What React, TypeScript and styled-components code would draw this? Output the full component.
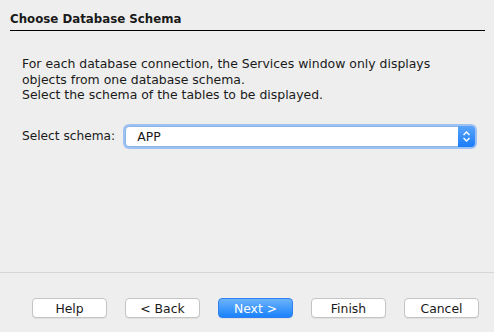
import * as React from 'react'
import styled, { createGlobalStyle } from 'styled-components'

const GlobalStyle = createGlobalStyle`
  html, body {
    margin: 0;
    padding: 0;
    background: #eeeeee;
  }
  body {
    font-family: "DejaVu Sans", "Liberation Sans", sans-serif;
    font-size: 12px;
    color: #1a1a1a;
  }
`

const Dialog = styled.div`
  width: 494px;
  height: 332px;
  display: flex;
  flex-direction: column;
  background: #eeeeee;
`

const Header = styled.div`
  margin: 12px 9px 0 10px;
  padding-bottom: 3px;
  border-bottom: 1px solid #000;
  font-weight: bold;
  font-size: 11.8px;
  line-height: 15px;
`

const Body = styled.div`
  flex: 1;
  padding: 25px 22px 0 22px;
`

const Intro = styled.p`
  margin: 0;
  font-size: 12.45px;
  line-height: 15.5px;
`

const SchemaRow = styled.div`
  display: flex;
  align-items: center;
  margin-top: 23px;
  gap: 10px;
`

const Label = styled.span`
  flex: 0 0 92px;
  white-space: nowrap;
  font-size: 12.2px;
`

const SelectBox = styled.div`
  flex: 1;
  margin-right: -3px;
  height: 19px;
  display: flex;
  align-items: center;
  background: #fff;
  border: 1px solid #8fb4e8;
  border-radius: 4px;
  box-shadow: 0 0 0 2px #9dc1f2;
`

const SelectText = styled.span`
  padding-left: 11px;
  flex: 1;
  font-size: 12.4px;
`

const Stepper = styled.div`
  width: 17px;
  align-self: stretch;
  margin: -1px -1px -1px 0;
  border-radius: 0 4px 4px 0;
  background: linear-gradient(#5aa4fb, #1a7cf8);
  display: flex;
  align-items: center;
  justify-content: center;
`

const Footer = styled.div`
  border-top: 1px solid #d6d6d6;
  height: 60px;
  display: flex;
  align-items: flex-start;
  padding: 25px 0 0 32px;
  gap: 18px;
  box-sizing: border-box;
`

const Button = styled.button<{ $primary?: boolean }>`
  width: 75px;
  height: 20px;
  padding: 0;
  font-family: inherit;
  font-size: 12.4px;
  border-radius: 4px;
  border: 1px solid ${(p) => (p.$primary ? '#2f7ff0' : '#c4c4c4')};
  background: ${(p) =>
    p.$primary ? 'linear-gradient(#6cb3fa, #1a82fb)' : '#ffffff'};
  color: ${(p) => (p.$primary ? '#ffffff' : '#1a1a1a')};
  box-shadow: 0 1px 0 rgba(0, 0, 0, 0.06);
`

const Arrows = () => (
  <svg width="9" height="13" viewBox="0 0 9 13">
    <path d="M1.5 5 L4.5 2 L7.5 5" fill="none" stroke="#fff" strokeWidth="1.4" />
    <path d="M1.5 8 L4.5 11 L7.5 8" fill="none" stroke="#fff" strokeWidth="1.4" />
  </svg>
)

const App = () => (
  <Dialog>
    <GlobalStyle />
    <Header>Choose Database Schema</Header>
    <Body>
      <Intro>
        For each database connection, the Services window only displays
        <br />
        objects from one database schema.
        <br />
        Select the schema of the tables to be displayed.
      </Intro>
      <SchemaRow>
        <Label>Select schema:</Label>
        <SelectBox>
          <SelectText>APP</SelectText>
          <Stepper>
            <Arrows />
          </Stepper>
        </SelectBox>
      </SchemaRow>
    </Body>
    <Footer>
      <Button>Help</Button>
      <Button>&lt; Back</Button>
      <Button $primary>Next &gt;</Button>
      <Button>Finish</Button>
      <Button>Cancel</Button>
    </Footer>
  </Dialog>
)

export default App
